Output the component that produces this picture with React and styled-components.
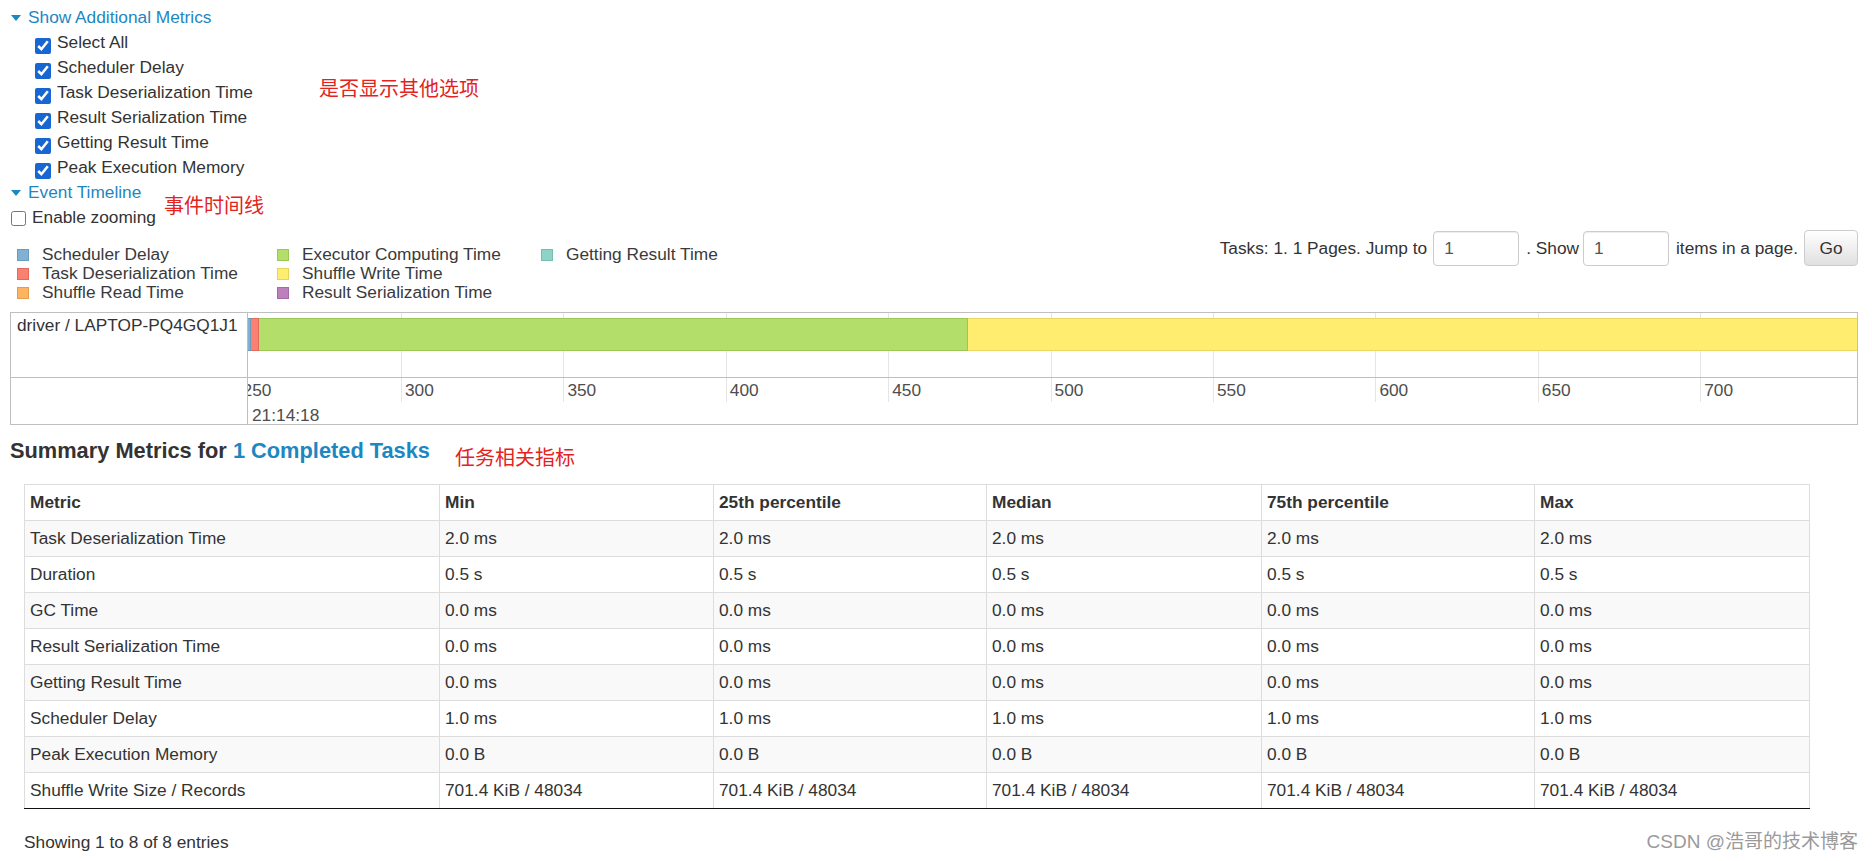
import React from 'react';
import styled, { createGlobalStyle } from 'styled-components';

const BLUE = '#1d87c2';
const RED_NOTE = '#e3231f';
const PX_PER_MS = 3.248;
const AXIS_ORIGIN = 153; // px offset of the "300" tick inside the lane

const GlobalStyle = createGlobalStyle`
  html, body { margin: 0; padding: 0; background: #fff; }
  body {
    font-family: "Liberation Sans", Arial, "Noto Sans CJK SC", sans-serif;
    font-size: 17.3px;
    color: #333;
  }
  * { box-sizing: border-box; }
`;

const Page = styled.div`
  position: relative;
  width: 1872px;
  padding: 5px 14px 0 10px;
`;

const Note = styled.span`
  color: ${RED_NOTE};
  font-family: "Noto Sans CJK SC", sans-serif;
  font-size: 20px;
  line-height: 20px;
  white-space: nowrap;
`;

const FloatingNote = styled(Note)`
  position: absolute;
  left: ${(p) => p.$x}px;
  top: ${(p) => p.$y}px;
`;

const Toggle = styled.div`
  display: flex;
  align-items: center;
  height: 25px;
  color: ${BLUE};
  cursor: pointer;
`;

const Caret = styled.span`
  width: 0;
  height: 0;
  border-left: 5px solid transparent;
  border-right: 5px solid transparent;
  border-top: 6px solid ${BLUE};
  margin: 0 7px 0 1px;
`;

const CheckList = styled.div`
  padding-left: 25px;
`;

const CheckRow = styled.label`
  display: flex;
  align-items: center;
  height: 25px;
  white-space: nowrap;
`;

const CheckBox = styled.input.attrs({ type: 'checkbox' })`
  flex-shrink: 0;
  width: ${(p) => (p.$small ? 15 : 16)}px;
  height: ${(p) => (p.$small ? 15 : 16)}px;
  margin: ${(p) => (p.$small ? '2px 6px 0 1px' : '7px 6px 0 0')};
  accent-color: #1766d1;
`;

const Toolbar = styled.div`
  display: flex;
  justify-content: space-between;
  align-items: flex-start;
`;

const Legend = styled.div`
  display: grid;
  grid-template-columns: 260px 264px auto;
  grid-template-rows: repeat(3, 19px);
  grid-auto-flow: column;
  margin: 15px 0 0 7px;
`;

const LegendItem = styled.div`
  display: flex;
  align-items: center;
  gap: 13px;
  line-height: 19px;
  white-space: nowrap;
  color: #3a3a3a;
`;

const Swatch = styled.span`
  flex-shrink: 0;
  width: 12px;
  height: 12px;
  background: ${(p) => p.$color};
  border: 1px solid ${(p) => p.$border};
`;

const Pager = styled.form`
  display: flex;
  align-items: center;
  height: 36px;
  white-space: nowrap;
`;

const PageInput = styled.input`
  width: 86px;
  height: 35px;
  margin: 0 ${(p) => p.$mr}px 0 ${(p) => p.$ml}px;
  padding: 0 10px;
  border: 1px solid #ccc;
  border-radius: 4px;
  box-shadow: inset 0 1px 1px rgba(0, 0, 0, 0.075);
  font: inherit;
  color: #555;
`;

const GoButton = styled.button`
  width: 54px;
  height: 36px;
  margin-left: 6px;
  padding: 0;
  border: 1px solid #ccc;
  border-radius: 4px;
  background: linear-gradient(to bottom, #ffffff 0%, #e0e0e0 100%);
  font: inherit;
  color: #333;
`;

const Timeline = styled.div`
  margin-top: 10px;
  border: 1px solid #bfbfbf;
  display: grid;
  grid-template-columns: 237px 1fr;
  grid-template-rows: 65px 46px;
`;

const GroupLabel = styled.div`
  border-right: 1px solid #bfbfbf;
  border-bottom: 1px solid #bfbfbf;
  padding: 2px 6px;
  font-size: 17.3px;
  line-height: 20px;
  white-space: nowrap;
`;

const Lane = styled.div`
  position: relative;
  overflow: hidden;
  border-bottom: 1px solid #bfbfbf;
`;

const AxisSpacer = styled.div`
  border-right: 1px solid #bfbfbf;
`;

const Axis = styled.div`
  position: relative;
  overflow: hidden;
`;

const GridLine = styled.div`
  position: absolute;
  top: 0;
  width: 1px;
  height: ${(p) => p.$h};
  background: #e5e5e5;
`;

const TickLabel = styled.div`
  position: absolute;
  top: 2px;
  line-height: 20px;
  color: #4d4d4d;
  white-space: nowrap;
`;

const DateLabel = styled.div`
  position: absolute;
  top: 27px;
  left: 4px;
  line-height: 20px;
  color: #4d4d4d;
`;

const Bar = styled.div`
  position: absolute;
  left: 0;
  top: 5px;
  height: 33px;
  display: flex;
`;

const Segment = styled.div`
  flex-shrink: 0;
  height: 100%;
  background: ${(p) => p.$color};
  border-top: 1px solid ${(p) => p.$border};
  border-bottom: 1px solid ${(p) => p.$border};
  border-right: 1px solid ${(p) => p.$border};
`;

const HeadingRow = styled.div`
  display: flex;
  align-items: flex-start;
  margin-top: 13px;
`;

const Heading = styled.h4`
  margin: 0;
  font-size: 21.8px;
  font-weight: bold;
  line-height: 26px;
  white-space: nowrap;
`;

const HeadingLink = styled.a`
  color: ${BLUE};
  text-decoration: none;
`;

const HeadingNote = styled(Note)`
  margin: 9px 0 0 25px;
`;

const TableWrap = styled.div`
  margin: 17px 0 0 14px;
  width: 1785px;
`;

const Table = styled.table`
  width: 100%;
  border-collapse: collapse;
  table-layout: fixed;
  border: 1px solid #ddd;
`;

const Col = styled.col`
  width: ${(p) => p.$w}px;
`;

const Th = styled.th`
  text-align: left;
  font-weight: bold;
  height: 36px;
  padding: 0 5px;
  border: 1px solid #ddd;
  white-space: nowrap;
`;

const Td = styled.td`
  height: 36px;
  padding: 0 5px;
  border: 1px solid #ddd;
  white-space: nowrap;
`;

const Row = styled.tr`
  background: ${(p) => (p.$striped ? '#f9f9f9' : '#fff')};
  &:last-child td {
    border-bottom: 1px solid #111;
  }
`;

const Footer = styled.div`
  display: flex;
  justify-content: space-between;
  align-items: center;
  margin-top: 23px;
  padding-left: 14px;
  line-height: 20px;
`;

const Watermark = styled.span`
  color: #9a9a9a;
  font-size: 19px;
  font-family: "Liberation Sans", "Noto Sans CJK SC", sans-serif;
  white-space: nowrap;
`;

const METRIC_OPTIONS = [
  'Select All',
  'Scheduler Delay',
  'Task Deserialization Time',
  'Result Serialization Time',
  'Getting Result Time',
  'Peak Execution Memory',
];

const LEGEND = [
  { label: 'Scheduler Delay', color: '#80B1D3', border: '#6b9cbf' },
  { label: 'Task Deserialization Time', color: '#FB8072', border: '#e06a5e' },
  { label: 'Shuffle Read Time', color: '#FDB462', border: '#e49c4d' },
  { label: 'Executor Computing Time', color: '#B3DE69', border: '#9cc656' },
  { label: 'Shuffle Write Time', color: '#FFED6F', border: '#e6d45c' },
  { label: 'Result Serialization Time', color: '#BC80BD', border: '#a46aa5' },
  { label: 'Getting Result Time', color: '#8DD3C7', border: '#76bcb0' },
];

const SEGMENTS = [
  { ms: 0.95, color: '#80B1D3', border: '#6b9cbf' },
  { ms: 2.45, color: '#FB8072', border: '#e06a5e' },
  { ms: 218.3, color: '#B3DE69', border: '#9cc656' },
  { ms: 300, color: '#FFED6F', border: '#e9d964' },
];

const TICKS = [250, 300, 350, 400, 450, 500, 550, 600, 650, 700];
const tickX = (v) => AXIS_ORIGIN + (v - 300) * PX_PER_MS;

const COLUMNS = [
  { name: 'Metric', w: 415 },
  { name: 'Min', w: 274 },
  { name: '25th percentile', w: 273 },
  { name: 'Median', w: 275 },
  { name: '75th percentile', w: 273 },
  { name: 'Max', w: 275 },
];

const METRICS = [
  ['Task Deserialization Time', '2.0 ms'],
  ['Duration', '0.5 s'],
  ['GC Time', '0.0 ms'],
  ['Result Serialization Time', '0.0 ms'],
  ['Getting Result Time', '0.0 ms'],
  ['Scheduler Delay', '1.0 ms'],
  ['Peak Execution Memory', '0.0 B'],
  ['Shuffle Write Size / Records', '701.4 KiB / 48034'],
];

export default function App() {
  return (
    <>
      <GlobalStyle />
      <Page>
        <Toggle>
          <Caret />
          Show Additional Metrics
        </Toggle>
        <CheckList>
          {METRIC_OPTIONS.map((m) => (
            <CheckRow key={m}>
              <CheckBox defaultChecked />
              {m}
            </CheckRow>
          ))}
        </CheckList>
        <FloatingNote $x={319} $y={78}>是否显示其他选项</FloatingNote>

        <Toggle>
          <Caret />
          Event Timeline
        </Toggle>
        <CheckRow>
          <CheckBox $small />
          Enable zooming
        </CheckRow>
        <FloatingNote $x={164} $y={195}>事件时间线</FloatingNote>

        <Toolbar>
          <Legend>
            {LEGEND.map((l) => (
              <LegendItem key={l.label}>
                <Swatch $color={l.color} $border={l.border} />
                {l.label}
              </LegendItem>
            ))}
          </Legend>
          <Pager onSubmit={(e) => e.preventDefault()}>
            Tasks: 1. 1 Pages. Jump to
            <PageInput defaultValue="1" $ml={6} $mr={7} />
            . Show
            <PageInput defaultValue="1" $ml={4} $mr={7} />
            items in a page.
            <GoButton type="submit">Go</GoButton>
          </Pager>
        </Toolbar>

        <Timeline>
          <GroupLabel>driver / LAPTOP-PQ4GQ1J1</GroupLabel>
          <Lane>
            {TICKS.map((t) => (
              <GridLine key={t} $h="100%" style={{ left: tickX(t) }} />
            ))}
            <Bar>
              {SEGMENTS.map((s, i) => (
                <Segment
                  key={i}
                  $color={s.color}
                  $border={s.border}
                  style={{ width: s.ms * PX_PER_MS }}
                />
              ))}
            </Bar>
          </Lane>
          <AxisSpacer />
          <Axis>
            {TICKS.map((t) => (
              <React.Fragment key={t}>
                <GridLine $h="24px" style={{ left: tickX(t) }} />
                <TickLabel style={{ left: tickX(t) + 4 }}>{t}</TickLabel>
              </React.Fragment>
            ))}
            <DateLabel>21:14:18</DateLabel>
          </Axis>
        </Timeline>

        <HeadingRow>
          <Heading>
            Summary Metrics for <HeadingLink href="#tasks">1 Completed Tasks</HeadingLink>
          </Heading>
          <HeadingNote>任务相关指标</HeadingNote>
        </HeadingRow>

        <TableWrap>
          <Table>
            <colgroup>
              {COLUMNS.map((c) => (
                <Col key={c.name} $w={c.w} />
              ))}
            </colgroup>
            <thead>
              <tr>
                {COLUMNS.map((c) => (
                  <Th key={c.name}>{c.name}</Th>
                ))}
              </tr>
            </thead>
            <tbody>
              {METRICS.map(([name, value], i) => (
                <Row key={name} $striped={i % 2 === 0}>
                  <Td>{name}</Td>
                  {[0, 1, 2, 3, 4].map((k) => (
                    <Td key={k}>{value}</Td>
                  ))}
                </Row>
              ))}
            </tbody>
          </Table>
        </TableWrap>

        <Footer>
          <span>Showing 1 to 8 of 8 entries</span>
          <Watermark>CSDN @浩哥的技术博客</Watermark>
        </Footer>
      </Page>
    </>
  );
}
